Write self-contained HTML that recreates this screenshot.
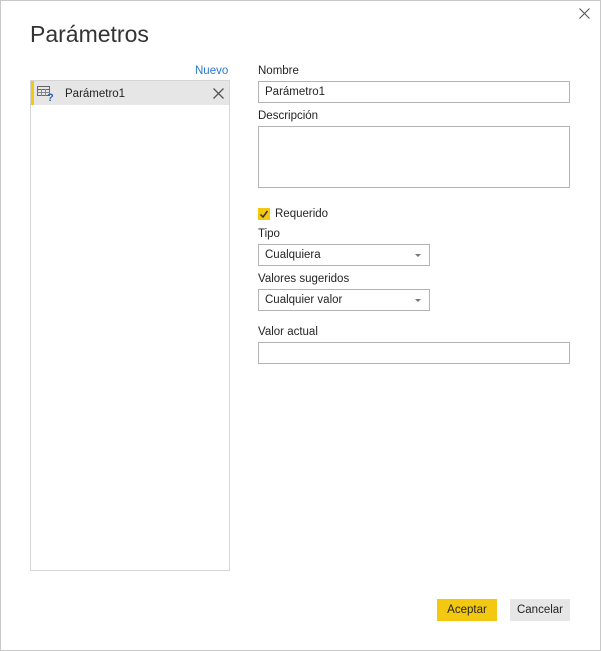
<!DOCTYPE html>
<html><head><style>
*{box-sizing:border-box;margin:0;padding:0}
body{width:601px;height:651px;background:#fff;font-family:"Liberation Sans",sans-serif;font-size:11.5px;color:#252423;position:relative;overflow:hidden}
.frame{position:absolute;left:0;top:0;width:601px;height:651px;border:1px solid #c8c8c8}
.abs{position:absolute}
.inp{position:absolute;border:1px solid #b3b3b3;background:#fff}
.lbl{position:absolute;font-size:11.5px;color:#252423}
</style></head><body>
<div class="frame"></div>
<svg class="abs" style="left:579px;top:8px" width="11" height="11"><path d="M0.5 0.5L10.5 10.5M10.5 0.5L0.5 10.5" stroke="#555" stroke-width="1.1"/></svg>
<div class="abs" style="left:30px;top:21px;font-size:23px;color:#333;font-weight:300">Parámetros</div>
<div class="abs" style="left:195px;top:65px;color:#2a7ad0">Nuevo</div>
<div class="abs" style="left:30px;top:80px;width:200px;height:491px;border:1px solid #d6d6d6"></div>
<div class="abs" style="left:31px;top:81px;width:198px;height:24px;background:#e6e6e6;border-left:3px solid #f2c811"></div>
<svg class="abs" style="left:37px;top:86px" width="18" height="16"><rect x="0.5" y="0.5" width="12" height="9" fill="none" stroke="#666"/><line x1="0" y1="3.5" x2="13" y2="3.5" stroke="#666"/><line x1="4.5" y1="3" x2="4.5" y2="10" stroke="#888"/><line x1="8.5" y1="3" x2="8.5" y2="10" stroke="#888"/><line x1="0" y1="6.5" x2="13" y2="6.5" stroke="#888"/><text x="10" y="15" font-size="11" font-weight="bold" fill="#2e5fa8" font-family="Liberation Sans">?</text></svg>
<div class="abs" style="left:65px;top:88px">Parámetro1</div>
<svg class="abs" style="left:213px;top:88px" width="11" height="11"><path d="M0.5 0.5L10.5 10.5M10.5 0.5L0.5 10.5" stroke="#555" stroke-width="1.3"/></svg>
<div class="lbl" style="left:258px;top:65px">Nombre</div>
<div class="inp" style="left:258px;top:81px;width:312px;height:22px;padding:4px 6px">Parámetro1</div>
<div class="lbl" style="left:258px;top:110px">Descripción</div>
<div class="inp" style="left:258px;top:126px;width:312px;height:62px"></div>
<div class="abs" style="left:258px;top:208px;width:12px;height:12px;background:#f2c811"></div>
<svg class="abs" style="left:258px;top:208px" width="12" height="12"><path d="M2.5 6.5L5 9L9.5 3" fill="none" stroke="#333" stroke-width="1.5"/></svg>
<div class="lbl" style="left:275px;top:208px">Requerido</div>
<div class="lbl" style="left:258px;top:228px">Tipo</div>
<div class="inp" style="left:258px;top:244px;width:172px;height:22px;padding:4px 6px">Cualquiera</div>
<div class="abs" style="left:415px;top:254px;border-left:3px solid transparent;border-right:3px solid transparent;border-top:3px solid #777"></div>
<div class="lbl" style="left:258px;top:273px">Valores sugeridos</div>
<div class="inp" style="left:258px;top:289px;width:172px;height:22px;padding:4px 6px">Cualquier valor</div>
<div class="abs" style="left:415px;top:299px;border-left:3px solid transparent;border-right:3px solid transparent;border-top:3px solid #777"></div>
<div class="lbl" style="left:258px;top:326px">Valor actual</div>
<div class="inp" style="left:258px;top:342px;width:312px;height:22px"></div>
<div class="abs" style="left:437px;top:599px;width:60px;height:22px;background:#f2c811;text-align:center;line-height:22px">Aceptar</div>
<div class="abs" style="left:510px;top:599px;width:60px;height:22px;background:#e6e6e6;text-align:center;line-height:22px">Cancelar</div>
</body></html>
